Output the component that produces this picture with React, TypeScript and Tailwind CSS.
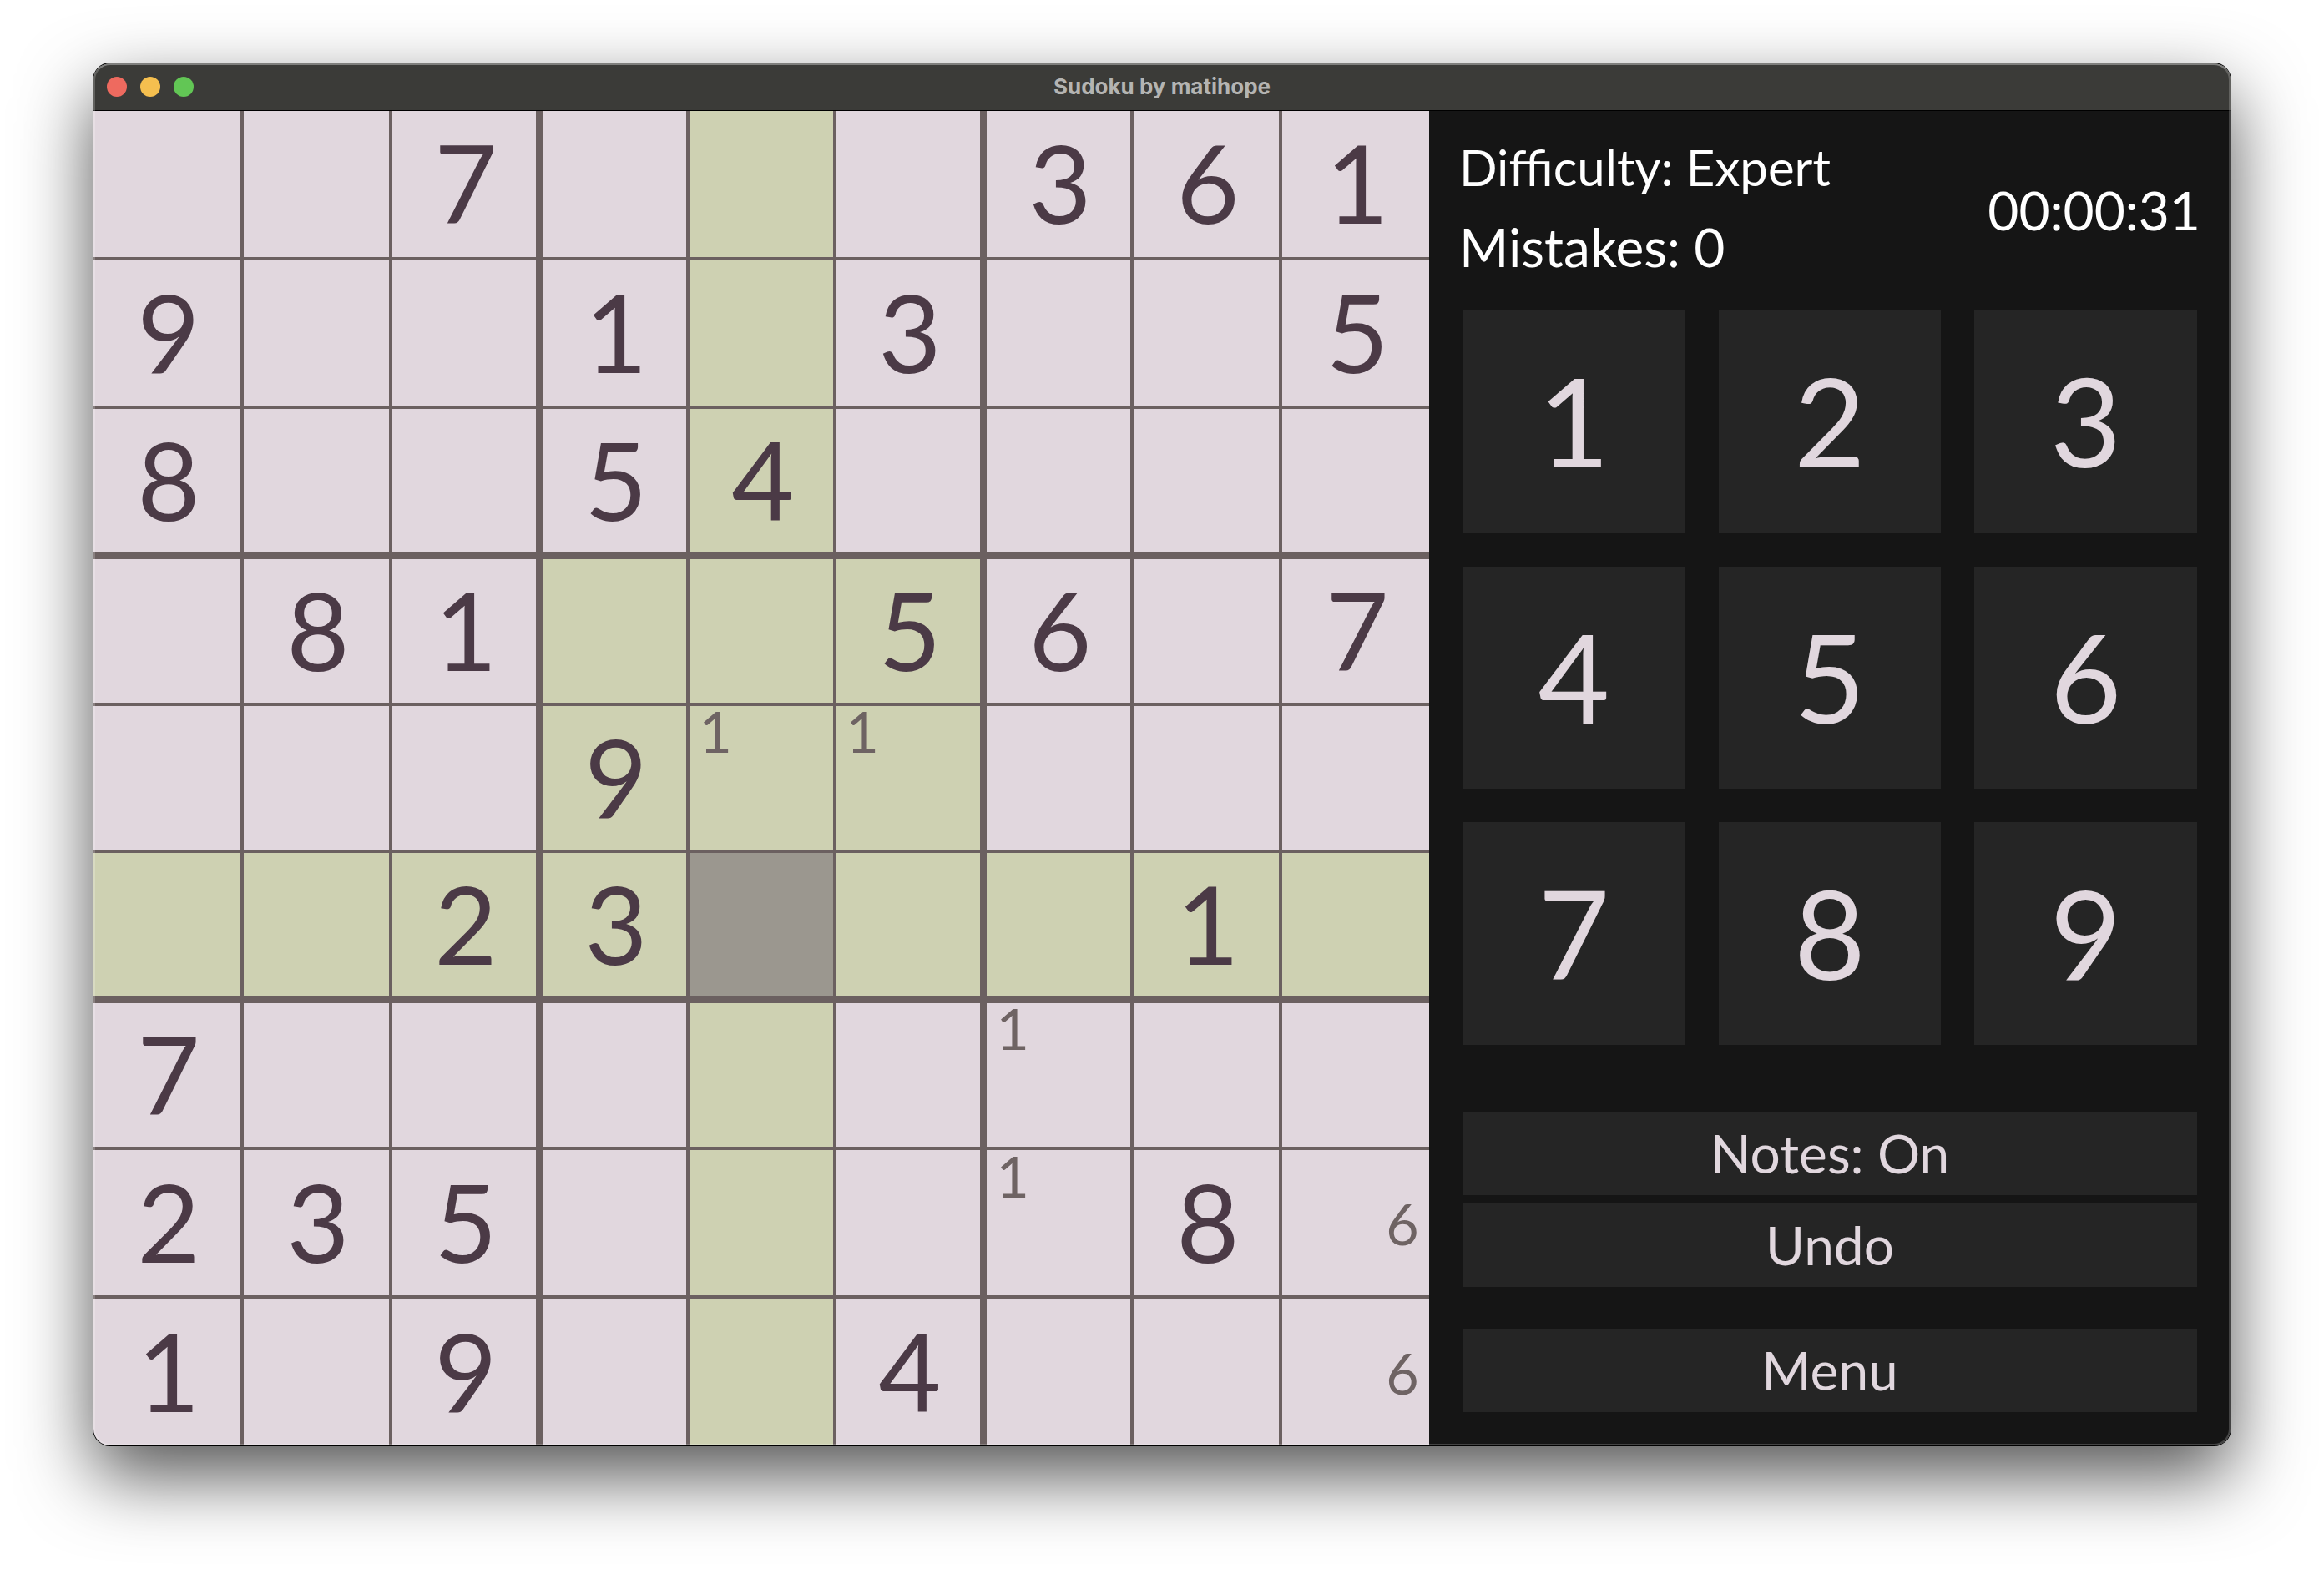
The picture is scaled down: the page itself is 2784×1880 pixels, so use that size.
import { useState } from "react";
import clsx from "clsx";

const BOARD = [
  "..7...361",
  "9..1.3..5",
  "8..54....",
  ".81..56.7",
  "...9.....",
  "..23...1.",
  "7........",
  "235....8.",
  "1.9..4...",
];

const NOTES: Record<string, number[]> = {
  "4-4": [1],
  "4-5": [1],
  "6-6": [1],
  "7-6": [1],
  "7-8": [6],
  "8-8": [6],
};

const DIGITS = [1, 2, 3, 4, 5, 6, 7, 8, 9];

type Position = { row: number; col: number };

function TitleBar() {
  return (
    <header className="relative flex h-14 items-center justify-center bg-[#3b3b38]">
      <div className="absolute inset-y-0 left-4 flex items-center gap-4">
        <button aria-label="Close" className="size-6 rounded-full bg-[#ee6a5f]" />
        <button aria-label="Minimize" className="size-6 rounded-full bg-[#f5bf4f]" />
        <button aria-label="Zoom" className="size-6 rounded-full bg-[#62c655]" />
      </div>
      <h1 className="font-[Inter,sans-serif] text-[26px] leading-8 font-bold text-[#b4b4b2]">
        Sudoku by matihope
      </h1>
    </header>
  );
}

function CellNotes({ notes }: { notes: number[] }) {
  return (
    <span className="grid h-full w-full grid-cols-3 grid-rows-3 px-1 pt-0.5 text-[68px] leading-none text-[#6e6363]">
      {DIGITS.map((digit) => (
        <span key={digit} className="flex min-h-0 min-w-0 items-center justify-center">
          {notes.includes(digit) ? digit : null}
        </span>
      ))}
    </span>
  );
}

function Cell({
  row,
  col,
  selected,
  onSelect,
}: Position & { selected: Position; onSelect: (p: Position) => void }) {
  const value = BOARD[row][col];
  const notes = NOTES[`${row}-${col}`];
  const isSelected = selected.row === row && selected.col === col;
  const sameBox =
    Math.floor(selected.row / 3) === Math.floor(row / 3) &&
    Math.floor(selected.col / 3) === Math.floor(col / 3);
  const related = selected.row === row || selected.col === col || sameBox;

  return (
    <button
      aria-label={`Row ${row + 1}, column ${col + 1}`}
      onClick={() => onSelect({ row, col })}
      className={clsx(
        "flex min-h-0 min-w-0 items-center justify-center border-[#6b6060] text-[130px] leading-none text-[#4b3a46]",
        isSelected ? "bg-[#9b978f]" : related ? "bg-[#ced1b2]" : "bg-[#e1d7de]",
        col === 0 ? "border-l-0" : col % 3 === 0 ? "border-l-4" : "border-l-2",
        col === 8 ? "border-r-0" : col % 3 === 2 ? "border-r-4" : "border-r-2",
        row === 0 ? "border-t-0" : row % 3 === 0 ? "border-t-4" : "border-t-2",
        row === 8 ? "border-b-0" : row % 3 === 2 ? "border-b-4" : "border-b-2",
      )}
    >
      {value !== "." && <span className="pb-1 pl-1">{value}</span>}
      {notes && <CellNotes notes={notes} />}
    </button>
  );
}

function ActionButton({ children, className }: { children: React.ReactNode; className?: string }) {
  return (
    <button
      className={clsx(
        "flex h-[100px] w-full items-center justify-center bg-[#252525] text-[64px] leading-none text-[#e1d7de]",
        className,
      )}
    >
      {children}
    </button>
  );
}

export default function App() {
  const [selected, setSelected] = useState<Position>({ row: 5, col: 4 });

  return (
    <div className="min-h-screen bg-white px-28 pt-[76px] pb-[148px] font-[Lato,sans-serif]">
      <div className="relative overflow-hidden rounded-[20px] shadow-[0_0_0_1px_#000,0_36px_88px_0_rgba(0,0,0,0.68)]">
        <TitleBar />
        <main className="grid grid-cols-[minmax(0,5fr)_minmax(0,3fr)] bg-[#151515]">
          <section
            aria-label="Board"
            className="grid aspect-square grid-cols-[178fr_178fr_178fr_178fr_176fr_178fr_178fr_178fr_178fr] grid-rows-[178fr_178fr_178fr_178fr_176fr_178fr_178fr_178fr_178fr]"
          >
            {BOARD.map((line, row) =>
              line
                .split("")
                .map((_, col) => (
                  <Cell key={`${row}-${col}`} row={row} col={col} selected={selected} onSelect={setSelected} />
                )),
            )}
          </section>
          <aside className="flex flex-col px-10 pb-10">
            <div className="-mx-1 flex h-60 items-center justify-between text-white">
              <div className="flex flex-col gap-4 pb-2">
                <p className="text-[60px] leading-20">Difficulty: Expert</p>
                <p className="text-[64px] leading-20">Mistakes: 0</p>
              </div>
              <time className="text-[64px] leading-20">00:00:31</time>
            </div>
            <div className="grid grid-cols-3 gap-10">
              {DIGITS.map((digit) => (
                <button
                  key={digit}
                  className="flex aspect-square items-center justify-center bg-[#252525] pb-1 text-[148px] leading-none text-[#e1d7de]"
                >
                  {digit}
                </button>
              ))}
            </div>
            <div className="mt-20 flex flex-col gap-2.5">
              <ActionButton>Notes: On</ActionButton>
              <ActionButton>Undo</ActionButton>
              <ActionButton className="mt-10">Menu</ActionButton>
            </div>
          </aside>
        </main>
        <div className="pointer-events-none absolute inset-x-0 top-14 h-px bg-black" />
        <div className="pointer-events-none absolute inset-0 rounded-[20px] border-2 border-white/20 border-t-white/35" />
      </div>
    </div>
  );
}
